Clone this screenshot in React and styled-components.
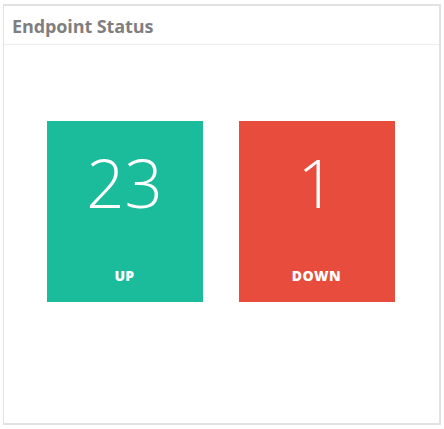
import styled, { createGlobalStyle } from "styled-components";

const GlobalStyle = createGlobalStyle`
  body {
    margin: 0;
    background: #fff;
    font-family: "Open Sans", "Liberation Sans", sans-serif;
  }
`;

export default function App() {
  return (
    <>
      <GlobalStyle />
      <Page>
        <Panel>
          <Header>
            <Title>Endpoint Status</Title>
          </Header>
          <Body>
            <StatTile color="#1abc9c">
              <Count>23</Count>
              <Label>UP</Label>
            </StatTile>
            <StatTile color="#e74c3c">
              <Count>1</Count>
              <Label>DOWN</Label>
            </StatTile>
          </Body>
        </Panel>
      </Page>
    </>
  );
}

const Page = styled.div`
  padding: 4px 0 0 3px;
`;

const Panel = styled.section`
  box-sizing: border-box;
  width: 438px;
  height: 421px;
  border: 2px solid #e2e2e2;
  border-left-width: 1px;
  display: flex;
  flex-direction: column;
`;

const Header = styled.header`
  box-sizing: border-box;
  height: 39px;
  padding: 2px 0 0 8px;
  display: flex;
  align-items: center;
  border-bottom: 1px solid #ececec;
`;

const Title = styled.h2`
  margin: 0;
  font-size: 18px;
  font-weight: 700;
  color: #7f7f7f;
  letter-spacing: -0.1px;
`;

const Body = styled.div`
  display: flex;
  justify-content: center;
  gap: 36px;
  padding-top: 76px;
  padding-right: 2px;
`;

const StatTile = styled.div`
  width: 156px;
  height: 181px;
  background: ${(p) => p.color};
  color: #fff;
  display: flex;
  flex-direction: column;
  align-items: center;
`;

const Count = styled.div`
  margin-top: 28px;
  font-size: 67px;
  font-weight: 300;
  line-height: 1;
`;

const Label = styled.div`
  margin-top: auto;
  margin-bottom: 19px;
  font-size: 14px;
  font-weight: 800;
  letter-spacing: 0.4px;
  line-height: 1;
`;
